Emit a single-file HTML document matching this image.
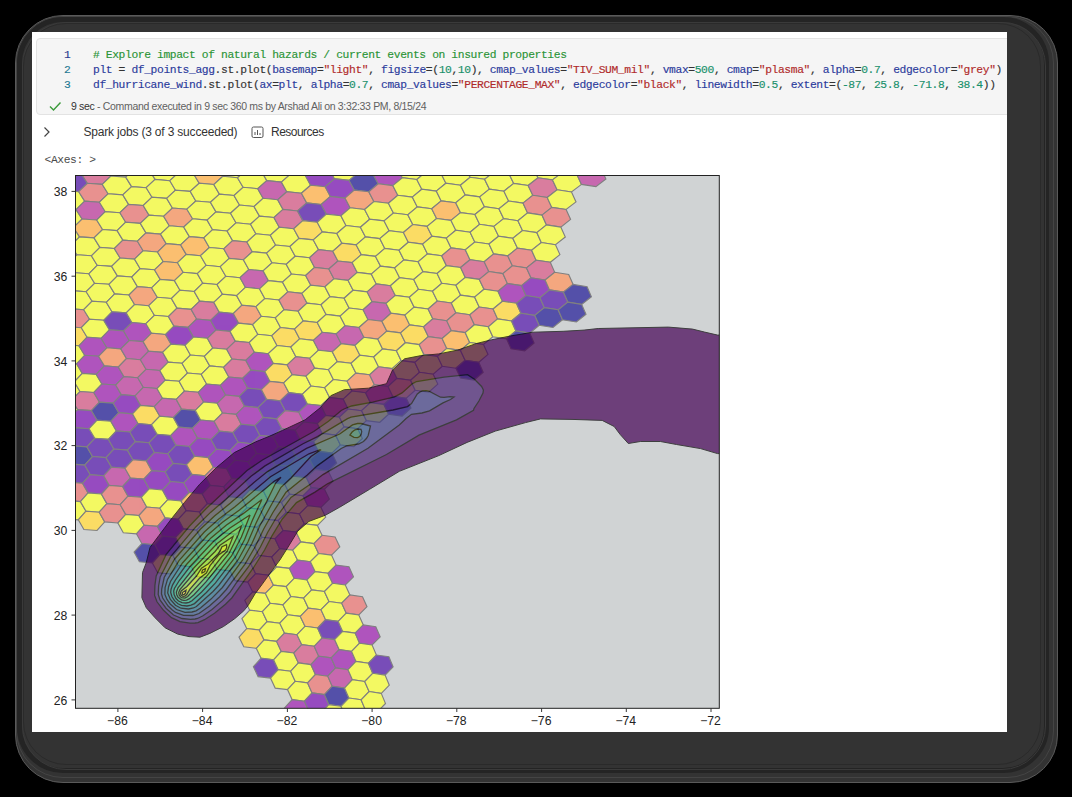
<!DOCTYPE html>
<html><head><meta charset="utf-8">
<style>
html,body{margin:0;padding:0;background:#000;width:1072px;height:797px;overflow:hidden;position:relative}
.sh{position:absolute;box-sizing:border-box}
.panel{position:absolute;left:32px;top:32px;width:975px;height:700px;background:#fff;overflow:hidden}
.code{position:absolute;left:4px;top:5.5px;width:980px;height:77px;background:#f5f5f5;border:1px solid #e3e3e3;border-radius:4px;box-sizing:border-box}
.mono{font-family:"Liberation Mono",monospace;font-size:11.3px;letter-spacing:-0.38px;-webkit-text-stroke:0.15px;white-space:pre;position:absolute;line-height:15px}
.sans{font-family:"Liberation Sans",sans-serif;white-space:pre;position:absolute}
.ln{color:#237893}
.kw{color:#2b3b9c}
.cm{color:#2a9436}
.st{color:#b02a2a}
.nu{color:#17906a}
.op{color:#333}
</style></head><body>
<div class="sh" style="left:15px;top:15px;width:1043px;height:768px;border-radius:48px;background:#333;border:1px solid #5a5a5a"></div>
<div class="sh" style="left:16px;top:16px;width:1038px;height:762px;border-radius:47px;border:1px solid #444"></div>
<div class="sh" style="left:17px;top:17px;width:1032px;height:756px;border-radius:46px;border:5px solid #242424"></div>
<div class="sh" style="left:22px;top:22px;width:1024px;height:748px;border-radius:44px;border:1px solid #3a3a3a"></div>
<div class="sh" style="left:23px;top:23px;width:1018px;height:742px;border-radius:43px;border:1px solid #2a2a2a"></div>
<div class="panel">
 <div class="code"></div>
 <div class="mono" style="left:32px;top:16px;color:#2a3b8f">1</div>
 <div class="mono ln" style="left:32px;top:31px">2</div>
 <div class="mono ln" style="left:32px;top:46px">3</div>
 <div class="mono" style="left:61px;top:16px"><span class="cm"># Explore impact of natural hazards / current events on insured properties</span></div>
 <div class="mono" style="left:61px;top:31px"><span class="kw">plt</span><span class="op"> = </span><span class="kw">df_points_agg</span><span class="op">.st.plot(</span><span class="kw">basemap</span><span class="op">=</span><span class="st">"light"</span><span class="op">, </span><span class="kw">figsize</span><span class="op">=(</span><span class="nu">10</span><span class="op">,</span><span class="nu">10</span><span class="op">), </span><span class="kw">cmap_values</span><span class="op">=</span><span class="st">"TIV_SUM_mil"</span><span class="op">, </span><span class="kw">vmax</span><span class="op">=</span><span class="nu">500</span><span class="op">, </span><span class="kw">cmap</span><span class="op">=</span><span class="st">"plasma"</span><span class="op">, </span><span class="kw">alpha</span><span class="op">=</span><span class="nu">0.7</span><span class="op">, </span><span class="kw">edgecolor</span><span class="op">=</span><span class="st">"grey"</span><span class="op">)</span></div>
 <div class="mono" style="left:61px;top:46px"><span class="kw">df_hurricane_wind</span><span class="op">.st.plot(</span><span class="kw">ax</span><span class="op">=</span><span class="kw">plt</span><span class="op">, </span><span class="kw">alpha</span><span class="op">=</span><span class="nu">0.7</span><span class="op">, </span><span class="kw">cmap_values</span><span class="op">=</span><span class="st">"PERCENTAGE_MAX"</span><span class="op">, </span><span class="kw">edgecolor</span><span class="op">=</span><span class="st">"black"</span><span class="op">, </span><span class="kw">linewidth</span><span class="op">=</span><span class="nu">0.5</span><span class="op">, </span><span class="kw">extent</span><span class="op">=(</span><span class="nu">-87</span><span class="op">, </span><span class="nu">25.8</span><span class="op">, </span><span class="nu">-71.8</span><span class="op">, </span><span class="nu">38.4</span><span class="op">))</span></div>

 <svg style="position:absolute;left:16px;top:68px" width="14" height="12" viewBox="0 0 14 12"><path d="M2 6.5 L5.5 10 L12.5 2.5" fill="none" stroke="#3a9a3a" stroke-width="1.4"/></svg>
 <div class="sans" style="left:39px;top:68px;font-size:10.5px;letter-spacing:-0.33px;color:#616161"><span style="color:#333">9 sec</span> - Command executed in 9 sec 360 ms by Arshad Ali on 3:32:33 PM, 8/15/24</div>
 <svg style="position:absolute;left:10px;top:94px" width="10" height="12" viewBox="0 0 10 12"><path d="M2.5 1.5 L7 6 L2.5 10.5" fill="none" stroke="#444" stroke-width="1.2"/></svg>
 <div class="sans" style="left:51.5px;top:93px;font-size:12px;letter-spacing:-0.19px;color:#333">Spark jobs (3 of 3 succeeded)</div>
 <svg style="position:absolute;left:219px;top:94px" width="14" height="13" viewBox="0 0 14 13"><rect x="1" y="1" width="11" height="10.5" rx="1.5" fill="none" stroke="#555" stroke-width="1"/><path d="M4 9V6M6.5 9V4M9 9V7" stroke="#555" stroke-width="1"/></svg>
 <div class="sans" style="left:239px;top:93px;font-size:12px;letter-spacing:-0.52px;color:#333">Resources</div>
 <div class="mono" style="left:12.5px;top:121px;color:#4a4a4a;-webkit-text-stroke:0">&lt;Axes: &gt;</div>
</div>
<svg width="1072" height="797" style="position:absolute;left:0;top:0" font-family="Liberation Sans, sans-serif">
<defs><clipPath id="ax"><rect x="75.5" y="175.5" width="643.8" height="532.8"/></clipPath></defs>
<rect x="75.5" y="175.5" width="643.8" height="532.8" fill="#d0d3d4"/>
<g clip-path="url(#ax)">
<g stroke="#808080" stroke-width="1.15">
<polygon points="90.2,165.5 81.4,173.9 66.6,172.9 60.5,163.5 69.3,155.1 84.1,156.1" fill="#f3f962"/>
<polygon points="87.4,183.3 78.7,191.7 64.0,190.7 57.9,181.3 66.6,172.9 81.4,173.9" fill="#784db8"/>
<polygon points="110.9,176.0 102.2,184.4 87.4,183.3 81.4,173.9 90.2,165.5 105.0,166.6" fill="#d97d9e"/>
<polygon points="134.5,168.8 125.7,177.1 110.9,176.0 105.0,166.6 113.8,158.2 128.6,159.3" fill="#f3f962"/>
<polygon points="158.2,161.7 149.3,170.0 134.5,168.8 128.6,159.3 137.5,151.0 152.4,152.2" fill="#f3f962"/>
<polygon points="84.7,201.1 76.1,209.6 61.5,208.6 55.4,199.2 64.0,190.7 78.7,191.7" fill="#f3f962"/>
<polygon points="108.1,193.8 99.4,202.2 84.7,201.1 78.7,191.7 87.4,183.3 102.2,184.4" fill="#e8918f"/>
<polygon points="131.6,186.6 122.8,194.9 108.1,193.8 102.2,184.4 110.9,176.0 125.7,177.1" fill="#f3f962"/>
<polygon points="155.1,179.4 146.2,187.7 131.6,186.6 125.7,177.1 134.5,168.8 149.3,170.0" fill="#f3f962"/>
<polygon points="178.8,172.4 169.8,180.7 155.1,179.4 149.3,170.0 158.2,161.7 173.0,162.9" fill="#f3f962"/>
<polygon points="202.5,165.5 193.5,173.7 178.8,172.4 173.0,162.9 182.0,154.7 196.8,155.9" fill="#f3f962"/>
<polygon points="82.1,219.0 73.5,227.4 59.0,226.5 52.9,217.0 61.5,208.6 76.1,209.6" fill="#f3f962"/>
<polygon points="105.3,211.7 96.7,220.0 82.1,219.0 76.1,209.6 84.7,201.1 99.4,202.2" fill="#c768af"/>
<polygon points="128.6,204.4 119.9,212.7 105.3,211.7 99.4,202.2 108.1,193.8 122.8,194.9" fill="#f3f962"/>
<polygon points="152.0,197.2 143.2,205.5 128.6,204.4 122.8,194.9 131.6,186.6 146.2,187.7" fill="#f3f962"/>
<polygon points="175.5,190.2 166.7,198.4 152.0,197.2 146.2,187.7 155.1,179.4 169.8,180.7" fill="#f3f962"/>
<polygon points="199.2,183.2 190.2,191.4 175.5,190.2 169.8,180.7 178.8,172.4 193.5,173.7" fill="#f3f962"/>
<polygon points="222.8,176.3 213.8,184.5 199.2,183.2 193.5,173.7 202.5,165.5 217.2,166.8" fill="#fbbf70"/>
<polygon points="246.6,169.6 237.5,177.7 222.8,176.3 217.2,166.8 226.3,158.6 241.1,160.0" fill="#f3f962"/>
<polygon points="270.5,162.9 261.3,171.0 246.6,169.6 241.1,160.0 250.3,151.9 265.0,153.3" fill="#f3f962"/>
<polygon points="79.5,236.9 71.0,245.3 56.5,244.4 50.5,234.9 59.0,226.5 73.5,227.4" fill="#f3f962"/>
<polygon points="102.6,229.5 94.0,237.9 79.5,236.9 73.5,227.4 82.1,219.0 96.7,220.0" fill="#fbbf70"/>
<polygon points="125.7,222.2 117.1,230.6 102.6,229.5 96.7,220.0 105.3,211.7 119.9,212.7" fill="#f3f962"/>
<polygon points="149.0,215.1 140.3,223.4 125.7,222.2 119.9,212.7 128.6,204.4 143.2,205.5" fill="#e8918f"/>
<polygon points="172.4,208.0 163.6,216.3 149.0,215.1 143.2,205.5 152.0,197.2 166.7,198.4" fill="#f3f962"/>
<polygon points="195.8,201.0 186.9,209.2 172.4,208.0 166.7,198.4 175.5,190.2 190.2,191.4" fill="#f3f962"/>
<polygon points="219.4,194.1 210.4,202.3 195.8,201.0 190.2,191.4 199.2,183.2 213.8,184.5" fill="#f3f962"/>
<polygon points="243.1,187.3 234.0,195.5 219.4,194.1 213.8,184.5 222.8,176.3 237.5,177.7" fill="#f3f962"/>
<polygon points="266.8,180.6 257.7,188.7 243.1,187.3 237.5,177.7 246.6,169.6 261.3,171.0" fill="#f3f962"/>
<polygon points="290.6,174.0 281.4,182.1 266.8,180.6 261.3,171.0 270.5,162.9 285.2,164.4" fill="#f3f962"/>
<polygon points="314.6,167.5 305.3,175.5 290.6,174.0 285.2,164.4 294.5,156.3 309.2,157.9" fill="#f3f962"/>
<polygon points="76.9,254.8 68.5,263.3 54.1,262.3 48.1,252.9 56.5,244.4 71.0,245.3" fill="#f3f962"/>
<polygon points="99.9,247.4 91.4,255.8 76.9,254.8 71.0,245.3 79.5,236.9 94.0,237.9" fill="#f3f962"/>
<polygon points="122.9,240.1 114.3,248.5 99.9,247.4 94.0,237.9 102.6,229.5 117.1,230.6" fill="#f3f962"/>
<polygon points="146.0,232.9 137.4,241.2 122.9,240.1 117.1,230.6 125.7,222.2 140.3,223.4" fill="#f3f962"/>
<polygon points="169.3,225.8 160.5,234.1 146.0,232.9 140.3,223.4 149.0,215.1 163.6,216.3" fill="#f3f962"/>
<polygon points="192.6,218.8 183.7,227.0 169.3,225.8 163.6,216.3 172.4,208.0 186.9,209.2" fill="#f4a77f"/>
<polygon points="216.0,211.9 207.1,220.1 192.6,218.8 186.9,209.2 195.8,201.0 210.4,202.3" fill="#f3f962"/>
<polygon points="239.5,205.0 230.5,213.2 216.0,211.9 210.4,202.3 219.4,194.1 234.0,195.5" fill="#f3f962"/>
<polygon points="263.1,198.3 254.0,206.5 239.5,205.0 234.0,195.5 243.1,187.3 257.7,188.7" fill="#f3f962"/>
<polygon points="286.8,191.7 277.7,199.8 263.1,198.3 257.7,188.7 266.8,180.6 281.4,182.1" fill="#c768af"/>
<polygon points="310.6,185.2 301.4,193.2 286.8,191.7 281.4,182.1 290.6,174.0 305.3,175.5" fill="#f3f962"/>
<polygon points="334.5,178.7 325.2,186.8 310.6,185.2 305.3,175.5 314.6,167.5 329.2,169.1" fill="#964bc0"/>
<polygon points="358.5,172.4 349.1,180.4 334.5,178.7 329.2,169.1 338.6,161.1 353.3,162.8" fill="#f3f962"/>
<polygon points="382.6,166.2 373.1,174.1 358.5,172.4 353.3,162.8 362.8,154.8 377.4,156.5" fill="#f3f962"/>
<polygon points="74.4,272.7 66.1,281.2 51.7,280.3 45.7,270.8 54.1,262.3 68.5,263.3" fill="#f3f962"/>
<polygon points="97.2,265.3 88.8,273.8 74.4,272.7 68.5,263.3 76.9,254.8 91.4,255.8" fill="#f3f962"/>
<polygon points="120.1,258.0 111.6,266.4 97.2,265.3 91.4,255.8 99.9,247.4 114.3,248.5" fill="#f3f962"/>
<polygon points="143.1,250.8 134.5,259.1 120.1,258.0 114.3,248.5 122.9,240.1 137.4,241.2" fill="#e8918f"/>
<polygon points="166.2,243.6 157.5,252.0 143.1,250.8 137.4,241.2 146.0,232.9 160.5,234.1" fill="#f4a77f"/>
<polygon points="189.4,236.6 180.6,244.9 166.2,243.6 160.5,234.1 169.3,225.8 183.7,227.0" fill="#f3f962"/>
<polygon points="212.6,229.7 203.8,237.9 189.4,236.6 183.7,227.0 192.6,218.8 207.1,220.1" fill="#f3f962"/>
<polygon points="236.0,222.8 227.1,231.0 212.6,229.7 207.1,220.1 216.0,211.9 230.5,213.2" fill="#f3f962"/>
<polygon points="259.5,216.1 250.5,224.2 236.0,222.8 230.5,213.2 239.5,205.0 254.0,206.5" fill="#f3f962"/>
<polygon points="283.0,209.4 273.9,217.5 259.5,216.1 254.0,206.5 263.1,198.3 277.7,199.8" fill="#f3f962"/>
<polygon points="306.7,202.9 297.5,211.0 283.0,209.4 277.7,199.8 286.8,191.7 301.4,193.2" fill="#d97d9e"/>
<polygon points="330.4,196.4 321.2,204.5 306.7,202.9 301.4,193.2 310.6,185.2 325.2,186.8" fill="#fbbf70"/>
<polygon points="354.3,190.1 345.0,198.1 330.4,196.4 325.2,186.8 334.5,178.7 349.1,180.4" fill="#964bc0"/>
<polygon points="378.2,183.8 368.8,191.8 354.3,190.1 349.1,180.4 358.5,172.4 373.1,174.1" fill="#5450a9"/>
<polygon points="402.3,177.7 392.8,185.6 378.2,183.8 373.1,174.1 382.6,166.2 397.2,168.0" fill="#af54bd"/>
<polygon points="426.4,171.6 416.8,179.5 402.3,177.7 397.2,168.0 406.8,160.1 421.4,161.9" fill="#f3f962"/>
<polygon points="450.7,165.6 441.0,173.5 426.4,171.6 421.4,161.9 431.1,154.0 445.7,155.9" fill="#f3f962"/>
<polygon points="94.6,283.3 86.2,291.7 72.0,290.7 66.1,281.2 74.4,272.7 88.8,273.8" fill="#f3f962"/>
<polygon points="117.4,275.9 108.9,284.3 94.6,283.3 88.8,273.8 97.2,265.3 111.6,266.4" fill="#f3f962"/>
<polygon points="140.2,268.7 131.7,277.0 117.4,275.9 111.6,266.4 120.1,258.0 134.5,259.1" fill="#f3f962"/>
<polygon points="163.2,261.5 154.5,269.8 140.2,268.7 134.5,259.1 143.1,250.8 157.5,252.0" fill="#f3f962"/>
<polygon points="186.2,254.4 177.5,262.7 163.2,261.5 157.5,252.0 166.2,243.6 180.6,244.9" fill="#fbbf70"/>
<polygon points="209.3,247.5 200.5,255.7 186.2,254.4 180.6,244.9 189.4,236.6 203.8,237.9" fill="#fbbf70"/>
<polygon points="232.6,240.6 223.7,248.8 209.3,247.5 203.8,237.9 212.6,229.7 227.1,231.0" fill="#f3f962"/>
<polygon points="255.9,233.8 246.9,242.0 232.6,240.6 227.1,231.0 236.0,222.8 250.5,224.2" fill="#f3f962"/>
<polygon points="279.3,227.2 270.3,235.3 255.9,233.8 250.5,224.2 259.5,216.1 273.9,217.5" fill="#f3f962"/>
<polygon points="302.8,220.6 293.7,228.7 279.3,227.2 273.9,217.5 283.0,209.4 297.5,211.0" fill="#d97d9e"/>
<polygon points="326.4,214.1 317.2,222.2 302.8,220.6 297.5,211.0 306.7,202.9 321.2,204.5" fill="#784db8"/>
<polygon points="350.1,207.8 340.9,215.8 326.4,214.1 321.2,204.5 330.4,196.4 345.0,198.1" fill="#af54bd"/>
<polygon points="373.9,201.5 364.6,209.5 350.1,207.8 345.0,198.1 354.3,190.1 368.8,191.8" fill="#f4a77f"/>
<polygon points="397.8,195.3 388.4,203.2 373.9,201.5 368.8,191.8 378.2,183.8 392.8,185.6" fill="#e8918f"/>
<polygon points="421.8,189.2 412.3,197.1 397.8,195.3 392.8,185.6 402.3,177.7 416.8,179.5" fill="#f3f962"/>
<polygon points="445.9,183.2 436.3,191.1 421.8,189.2 416.8,179.5 426.4,171.6 441.0,173.5" fill="#f3f962"/>
<polygon points="470.1,177.3 460.4,185.2 445.9,183.2 441.0,173.5 450.7,165.6 465.2,167.6" fill="#f3f962"/>
<polygon points="494.4,171.6 484.6,179.3 470.1,177.3 465.2,167.6 475.0,159.8 489.6,161.8" fill="#f3f962"/>
<polygon points="518.8,165.9 508.9,173.6 494.4,171.6 489.6,161.8 499.4,154.0 514.0,156.1" fill="#f3f962"/>
<polygon points="92.1,301.2 83.7,309.7 69.6,308.7 63.7,299.2 72.0,290.7 86.2,291.7" fill="#f3f962"/>
<polygon points="114.7,293.9 106.3,302.3 92.1,301.2 86.2,291.7 94.6,283.3 108.9,284.3" fill="#f3f962"/>
<polygon points="137.4,286.6 128.9,295.0 114.7,293.9 108.9,284.3 117.4,275.9 131.7,277.0" fill="#f3f962"/>
<polygon points="160.2,279.4 151.6,287.8 137.4,286.6 131.7,277.0 140.2,268.7 154.5,269.8" fill="#f3f962"/>
<polygon points="183.1,272.3 174.4,280.6 160.2,279.4 154.5,269.8 163.2,261.5 177.5,262.7" fill="#fbbf70"/>
<polygon points="206.1,265.3 197.3,273.6 183.1,272.3 177.5,262.7 186.2,254.4 200.5,255.7" fill="#f3f962"/>
<polygon points="229.2,258.4 220.3,266.7 206.1,265.3 200.5,255.7 209.3,247.5 223.7,248.8" fill="#f3f962"/>
<polygon points="252.3,251.7 243.4,259.8 229.2,258.4 223.7,248.8 232.6,240.6 246.9,242.0" fill="#e8918f"/>
<polygon points="275.6,245.0 266.6,253.1 252.3,251.7 246.9,242.0 255.9,233.8 270.3,235.3" fill="#f3f962"/>
<polygon points="299.0,238.4 289.9,246.5 275.6,245.0 270.3,235.3 279.3,227.2 293.7,228.7" fill="#f3f962"/>
<polygon points="322.4,231.9 313.3,239.9 299.0,238.4 293.7,228.7 302.8,220.6 317.2,222.2" fill="#fbdc64"/>
<polygon points="346.0,225.5 336.8,233.5 322.4,231.9 317.2,222.2 326.4,214.1 340.9,215.8" fill="#f3f962"/>
<polygon points="369.7,219.2 360.4,227.2 346.0,225.5 340.9,215.8 350.1,207.8 364.6,209.5" fill="#f3f962"/>
<polygon points="393.4,213.0 384.1,220.9 369.7,219.2 364.6,209.5 373.9,201.5 388.4,203.2" fill="#f3f962"/>
<polygon points="417.3,206.9 407.8,214.8 393.4,213.0 388.4,203.2 397.8,195.3 412.3,197.1" fill="#f3f962"/>
<polygon points="441.2,200.9 431.7,208.7 417.3,206.9 412.3,197.1 421.8,189.2 436.3,191.1" fill="#f3f962"/>
<polygon points="465.3,194.9 455.7,202.8 441.2,200.9 436.3,191.1 445.9,183.2 460.4,185.2" fill="#f3f962"/>
<polygon points="489.4,189.1 479.7,196.9 465.3,194.9 460.4,185.2 470.1,177.3 484.6,179.3" fill="#f3f962"/>
<polygon points="513.7,183.4 503.9,191.2 489.4,189.1 484.6,179.3 494.4,171.6 508.9,173.6" fill="#f3f962"/>
<polygon points="538.0,177.8 528.1,185.5 513.7,183.4 508.9,173.6 518.8,165.9 533.3,168.0" fill="#f3f962"/>
<polygon points="562.4,172.3 552.5,179.9 538.0,177.8 533.3,168.0 543.2,160.3 557.8,162.4" fill="#f3f962"/>
<polygon points="586.9,166.9 576.9,174.5 562.4,172.3 557.8,162.4 567.8,154.8 582.4,157.0" fill="#f3f962"/>
<polygon points="89.6,319.2 81.3,327.7 67.2,326.7 61.3,317.2 69.6,308.7 83.7,309.7" fill="#e8918f"/>
<polygon points="112.0,311.8 103.7,320.3 89.6,319.2 83.7,309.7 92.1,301.2 106.3,302.3" fill="#f3f962"/>
<polygon points="134.6,304.5 126.2,312.9 112.0,311.8 106.3,302.3 114.7,293.9 128.9,295.0" fill="#f3f962"/>
<polygon points="157.3,297.3 148.7,305.7 134.6,304.5 128.9,295.0 137.4,286.6 151.6,287.8" fill="#f4a77f"/>
<polygon points="180.0,290.2 171.4,298.5 157.3,297.3 151.6,287.8 160.2,279.4 174.4,280.6" fill="#f3f962"/>
<polygon points="202.8,283.2 194.2,291.5 180.0,290.2 174.4,280.6 183.1,272.3 197.3,273.6" fill="#f3f962"/>
<polygon points="225.8,276.3 217.0,284.5 202.8,283.2 197.3,273.6 206.1,265.3 220.3,266.7" fill="#f3f962"/>
<polygon points="248.8,269.5 240.0,277.7 225.8,276.3 220.3,266.7 229.2,258.4 243.4,259.8" fill="#f3f962"/>
<polygon points="272.0,262.8 263.1,270.9 248.8,269.5 243.4,259.8 252.3,251.7 266.6,253.1" fill="#f3f962"/>
<polygon points="295.2,256.2 286.2,264.3 272.0,262.8 266.6,253.1 275.6,245.0 289.9,246.5" fill="#f3f962"/>
<polygon points="318.5,249.6 309.5,257.7 295.2,256.2 289.9,246.5 299.0,238.4 313.3,239.9" fill="#f3f962"/>
<polygon points="341.9,243.2 332.8,251.3 318.5,249.6 313.3,239.9 322.4,231.9 336.8,233.5" fill="#f3f962"/>
<polygon points="365.5,236.9 356.2,244.9 341.9,243.2 336.8,233.5 346.0,225.5 360.4,227.2" fill="#f3f962"/>
<polygon points="389.1,230.7 379.8,238.6 365.5,236.9 360.4,227.2 369.7,219.2 384.1,220.9" fill="#f3f962"/>
<polygon points="412.8,224.5 403.4,232.5 389.1,230.7 384.1,220.9 393.4,213.0 407.8,214.8" fill="#f3f962"/>
<polygon points="436.6,218.5 427.1,226.4 412.8,224.5 407.8,214.8 417.3,206.9 431.7,208.7" fill="#f3f962"/>
<polygon points="460.5,212.6 451.0,220.4 436.6,218.5 431.7,208.7 441.2,200.9 455.7,202.8" fill="#fbbf70"/>
<polygon points="484.5,206.7 474.9,214.5 460.5,212.6 455.7,202.8 465.3,194.9 479.7,196.9" fill="#f3f962"/>
<polygon points="508.6,201.0 498.9,208.8 484.5,206.7 479.7,196.9 489.4,189.1 503.9,191.2" fill="#f3f962"/>
<polygon points="532.8,195.3 523.0,203.1 508.6,201.0 503.9,191.2 513.7,183.4 528.1,185.5" fill="#f3f962"/>
<polygon points="557.1,189.8 547.2,197.5 532.8,195.3 528.1,185.5 538.0,177.8 552.5,179.9" fill="#d97d9e"/>
<polygon points="581.5,184.4 571.5,192.0 557.1,189.8 552.5,179.9 562.4,172.3 576.9,174.5" fill="#f3f962"/>
<polygon points="605.9,179.0 595.9,186.6 581.5,184.4 576.9,174.5 586.9,166.9 601.5,169.1" fill="#c768af"/>
<polygon points="87.1,337.2 78.9,345.8 64.9,344.8 59.0,335.3 67.2,326.7 81.3,327.7" fill="#fbdc64"/>
<polygon points="109.4,329.8 101.1,338.3 87.1,337.2 81.3,327.7 89.6,319.2 103.7,320.3" fill="#f3f962"/>
<polygon points="131.9,322.5 123.5,330.9 109.4,329.8 103.7,320.3 112.0,311.8 126.2,312.9" fill="#784db8"/>
<polygon points="154.4,315.3 145.9,323.7 131.9,322.5 126.2,312.9 134.6,304.5 148.7,305.7" fill="#f3f962"/>
<polygon points="177.0,308.1 168.4,316.5 154.4,315.3 148.7,305.7 157.3,297.3 171.4,298.5" fill="#f3f962"/>
<polygon points="199.7,301.1 191.1,309.4 177.0,308.1 171.4,298.5 180.0,290.2 194.2,291.5" fill="#f3f962"/>
<polygon points="222.5,294.2 213.8,302.4 199.7,301.1 194.2,291.5 202.8,283.2 217.0,284.5" fill="#f3f962"/>
<polygon points="245.4,287.3 236.6,295.6 222.5,294.2 217.0,284.5 225.8,276.3 240.0,277.7" fill="#f3f962"/>
<polygon points="268.4,280.6 259.5,288.8 245.4,287.3 240.0,277.7 248.8,269.5 263.1,270.9" fill="#c768af"/>
<polygon points="291.5,274.0 282.5,282.1 268.4,280.6 263.1,270.9 272.0,262.8 286.2,264.3" fill="#f3f962"/>
<polygon points="314.6,267.4 305.6,275.5 291.5,274.0 286.2,264.3 295.2,256.2 309.5,257.7" fill="#f3f962"/>
<polygon points="337.9,261.0 328.8,269.0 314.6,267.4 309.5,257.7 318.5,249.6 332.8,251.3" fill="#d97d9e"/>
<polygon points="361.3,254.6 352.1,262.6 337.9,261.0 332.8,251.3 341.9,243.2 356.2,244.9" fill="#fbdc64"/>
<polygon points="384.8,248.4 375.5,256.4 361.3,254.6 356.2,244.9 365.5,236.9 379.8,238.6" fill="#f3f962"/>
<polygon points="408.3,242.2 399.0,250.2 384.8,248.4 379.8,238.6 389.1,230.7 403.4,232.5" fill="#f3f962"/>
<polygon points="432.0,236.2 422.6,244.1 408.3,242.2 403.4,232.5 412.8,224.5 427.1,226.4" fill="#fbdc64"/>
<polygon points="455.8,230.2 446.3,238.1 432.0,236.2 427.1,226.4 436.6,218.5 451.0,220.4" fill="#f3f962"/>
<polygon points="479.6,224.3 470.1,232.2 455.8,230.2 451.0,220.4 460.5,212.6 474.9,214.5" fill="#f3f962"/>
<polygon points="503.6,218.6 493.9,226.4 479.6,224.3 474.9,214.5 484.5,206.7 498.9,208.8" fill="#f3f962"/>
<polygon points="527.6,212.9 517.9,220.7 503.6,218.6 498.9,208.8 508.6,201.0 523.0,203.1" fill="#f3f962"/>
<polygon points="551.8,207.4 542.0,215.1 527.6,212.9 523.0,203.1 532.8,195.3 547.2,197.5" fill="#e8918f"/>
<polygon points="576.0,201.9 566.1,209.5 551.8,207.4 547.2,197.5 557.1,189.8 571.5,192.0" fill="#f3f962"/>
<polygon points="84.7,355.3 76.6,363.8 62.6,362.8 56.8,353.3 64.9,344.8 78.9,345.8" fill="#f3f962"/>
<polygon points="106.9,347.8 98.6,356.3 84.7,355.3 78.9,345.8 87.1,337.2 101.1,338.3" fill="#af54bd"/>
<polygon points="129.2,340.5 120.8,348.9 106.9,347.8 101.1,338.3 109.4,329.8 123.5,330.9" fill="#af54bd"/>
<polygon points="151.5,333.2 143.1,341.6 129.2,340.5 123.5,330.9 131.9,322.5 145.9,323.7" fill="#af54bd"/>
<polygon points="174.0,326.1 165.5,334.5 151.5,333.2 145.9,323.7 154.4,315.3 168.4,316.5" fill="#f3f962"/>
<polygon points="196.6,319.0 188.0,327.4 174.0,326.1 168.4,316.5 177.0,308.1 191.1,309.4" fill="#e8918f"/>
<polygon points="219.2,312.1 210.6,320.4 196.6,319.0 191.1,309.4 199.7,301.1 213.8,302.4" fill="#d97d9e"/>
<polygon points="242.0,305.2 233.3,313.5 219.2,312.1 213.8,302.4 222.5,294.2 236.6,295.6" fill="#f3f962"/>
<polygon points="264.8,298.5 256.0,306.7 242.0,305.2 236.6,295.6 245.4,287.3 259.5,288.8" fill="#f3f962"/>
<polygon points="287.8,291.8 278.9,300.0 264.8,298.5 259.5,288.8 268.4,280.6 282.5,282.1" fill="#f3f962"/>
<polygon points="310.8,285.2 301.9,293.4 287.8,291.8 282.5,282.1 291.5,274.0 305.6,275.5" fill="#f3f962"/>
<polygon points="333.9,278.8 324.9,286.8 310.8,285.2 305.6,275.5 314.6,267.4 328.8,269.0" fill="#e8918f"/>
<polygon points="357.2,272.4 348.1,280.4 333.9,278.8 328.8,269.0 337.9,261.0 352.1,262.6" fill="#d97d9e"/>
<polygon points="380.5,266.1 371.3,274.1 357.2,272.4 352.1,262.6 361.3,254.6 375.5,256.4" fill="#f3f962"/>
<polygon points="403.9,259.9 394.7,267.9 380.5,266.1 375.5,256.4 384.8,248.4 399.0,250.2" fill="#f3f962"/>
<polygon points="427.5,253.9 418.1,261.8 403.9,259.9 399.0,250.2 408.3,242.2 422.6,244.1" fill="#f3f962"/>
<polygon points="451.1,247.9 441.7,255.8 427.5,253.9 422.6,244.1 432.0,236.2 446.3,238.1" fill="#f3f962"/>
<polygon points="474.8,242.0 465.3,249.8 451.1,247.9 446.3,238.1 455.8,230.2 470.1,232.2" fill="#f3f962"/>
<polygon points="498.6,236.2 489.0,244.0 474.8,242.0 470.1,232.2 479.6,224.3 493.9,226.4" fill="#f3f962"/>
<polygon points="522.5,230.5 512.8,238.3 498.6,236.2 493.9,226.4 503.6,218.6 517.9,220.7" fill="#f3f962"/>
<polygon points="546.5,224.9 536.8,232.6 522.5,230.5 517.9,220.7 527.6,212.9 542.0,215.1" fill="#f3f962"/>
<polygon points="570.6,219.4 560.8,227.1 546.5,224.9 542.0,215.1 551.8,207.4 566.1,209.5" fill="#e8918f"/>
<polygon points="82.3,373.4 74.2,381.9 60.4,380.9 54.5,371.4 62.6,362.8 76.6,363.8" fill="#f3f962"/>
<polygon points="104.4,365.9 96.2,374.4 82.3,373.4 76.6,363.8 84.7,355.3 98.6,356.3" fill="#af54bd"/>
<polygon points="126.5,358.5 118.3,367.0 104.4,365.9 98.6,356.3 106.9,347.8 120.8,348.9" fill="#f4a77f"/>
<polygon points="148.7,351.2 140.4,359.7 126.5,358.5 120.8,348.9 129.2,340.5 143.1,341.6" fill="#c768af"/>
<polygon points="171.1,344.1 162.6,352.4 148.7,351.2 143.1,341.6 151.5,333.2 165.5,334.5" fill="#f4a77f"/>
<polygon points="193.5,337.0 185.0,345.3 171.1,344.1 165.5,334.5 174.0,326.1 188.0,327.4" fill="#964bc0"/>
<polygon points="216.0,330.0 207.4,338.3 193.5,337.0 188.0,327.4 196.6,319.0 210.6,320.4" fill="#af54bd"/>
<polygon points="238.6,323.1 230.0,331.4 216.0,330.0 210.6,320.4 219.2,312.1 233.3,313.5" fill="#964bc0"/>
<polygon points="261.3,316.3 252.6,324.6 238.6,323.1 233.3,313.5 242.0,305.2 256.0,306.7" fill="#f4a77f"/>
<polygon points="284.1,309.7 275.3,317.8 261.3,316.3 256.0,306.7 264.8,298.5 278.9,300.0" fill="#f3f962"/>
<polygon points="307.0,303.1 298.1,311.2 284.1,309.7 278.9,300.0 287.8,291.8 301.9,293.4" fill="#e8918f"/>
<polygon points="330.0,296.6 321.0,304.7 307.0,303.1 301.9,293.4 310.8,285.2 324.9,286.8" fill="#f3f962"/>
<polygon points="353.1,290.2 344.1,298.2 330.0,296.6 324.9,286.8 333.9,278.8 348.1,280.4" fill="#f3f962"/>
<polygon points="376.3,283.9 367.2,291.9 353.1,290.2 348.1,280.4 357.2,272.4 371.3,274.1" fill="#f3f962"/>
<polygon points="399.6,277.7 390.4,285.7 376.3,283.9 371.3,274.1 380.5,266.1 394.7,267.9" fill="#f3f962"/>
<polygon points="423.0,271.6 413.7,279.5 399.6,277.7 394.7,267.9 403.9,259.9 418.1,261.8" fill="#f3f962"/>
<polygon points="446.4,265.6 437.1,273.5 423.0,271.6 418.1,261.8 427.5,253.9 441.7,255.8" fill="#f3f962"/>
<polygon points="470.0,259.7 460.6,267.5 446.4,265.6 441.7,255.8 451.1,247.9 465.3,249.8" fill="#e8918f"/>
<polygon points="493.7,253.9 484.2,261.7 470.0,259.7 465.3,249.8 474.8,242.0 489.0,244.0" fill="#f3f962"/>
<polygon points="517.4,248.1 507.8,255.9 493.7,253.9 489.0,244.0 498.6,236.2 512.8,238.3" fill="#f3f962"/>
<polygon points="541.3,242.5 531.6,250.3 517.4,248.1 512.8,238.3 522.5,230.5 536.8,232.6" fill="#f3f962"/>
<polygon points="565.3,237.0 555.5,244.7 541.3,242.5 536.8,232.6 546.5,224.9 560.8,227.1" fill="#f3f962"/>
<polygon points="80.0,391.5 72.0,400.0 58.2,399.0 52.4,389.5 60.4,380.9 74.2,381.9" fill="#f3f962"/>
<polygon points="101.9,384.0 93.8,392.5 80.0,391.5 74.2,381.9 82.3,373.4 96.2,374.4" fill="#f3f962"/>
<polygon points="123.9,376.6 115.7,385.0 101.9,384.0 96.2,374.4 104.4,365.9 118.3,367.0" fill="#af54bd"/>
<polygon points="146.0,369.3 137.7,377.7 123.9,376.6 118.3,367.0 126.5,358.5 140.4,359.7" fill="#d97d9e"/>
<polygon points="168.2,362.1 159.8,370.5 146.0,369.3 140.4,359.7 148.7,351.2 162.6,352.4" fill="#c768af"/>
<polygon points="190.4,355.0 182.0,363.3 168.2,362.1 162.6,352.4 171.1,344.1 185.0,345.3" fill="#f3f962"/>
<polygon points="212.8,348.0 204.3,356.3 190.4,355.0 185.0,345.3 193.5,337.0 207.4,338.3" fill="#f3f962"/>
<polygon points="235.3,341.1 226.7,349.3 212.8,348.0 207.4,338.3 216.0,330.0 230.0,331.4" fill="#d97d9e"/>
<polygon points="257.8,334.3 249.2,342.5 235.3,341.1 230.0,331.4 238.6,323.1 252.6,324.6" fill="#f3f962"/>
<polygon points="280.5,327.5 271.8,335.7 257.8,334.3 252.6,324.6 261.3,316.3 275.3,317.8" fill="#f3f962"/>
<polygon points="303.3,320.9 294.5,329.1 280.5,327.5 275.3,317.8 284.1,309.7 298.1,311.2" fill="#f3f962"/>
<polygon points="326.1,314.4 317.2,322.5 303.3,320.9 298.1,311.2 307.0,303.1 321.0,304.7" fill="#f3f962"/>
<polygon points="349.1,308.0 340.1,316.1 326.1,314.4 321.0,304.7 330.0,296.6 344.1,298.2" fill="#f3f962"/>
<polygon points="372.1,301.7 363.1,309.7 349.1,308.0 344.1,298.2 353.1,290.2 367.2,291.9" fill="#f3f962"/>
<polygon points="395.3,295.4 386.1,303.4 372.1,301.7 367.2,291.9 376.3,283.9 390.4,285.7" fill="#d97d9e"/>
<polygon points="418.5,289.3 409.3,297.3 395.3,295.4 390.4,285.7 399.6,277.7 413.7,279.5" fill="#f3f962"/>
<polygon points="441.8,283.3 432.5,291.2 418.5,289.3 413.7,279.5 423.0,271.6 437.1,273.5" fill="#f3f962"/>
<polygon points="465.3,277.4 455.9,285.2 441.8,283.3 437.1,273.5 446.4,265.6 460.6,267.5" fill="#f3f962"/>
<polygon points="488.8,271.5 479.3,279.4 465.3,277.4 460.6,267.5 470.0,259.7 484.2,261.7" fill="#d97d9e"/>
<polygon points="512.4,265.8 502.9,273.6 488.8,271.5 484.2,261.7 493.7,253.9 507.8,255.9" fill="#e8918f"/>
<polygon points="536.1,260.2 526.5,267.9 512.4,265.8 507.8,255.9 517.4,248.1 531.6,250.3" fill="#e8918f"/>
<polygon points="559.9,254.6 550.3,262.3 536.1,260.2 531.6,250.3 541.3,242.5 555.5,244.7" fill="#f3f962"/>
<polygon points="77.7,409.6 69.8,418.1 56.1,417.2 50.3,407.6 58.2,399.0 72.0,400.0" fill="#f3f962"/>
<polygon points="99.5,402.1 91.4,410.6 77.7,409.6 72.0,400.0 80.0,391.5 93.8,392.5" fill="#d97d9e"/>
<polygon points="121.3,394.6 113.2,403.1 99.5,402.1 93.8,392.5 101.9,384.0 115.7,385.0" fill="#af54bd"/>
<polygon points="143.3,387.3 135.1,395.8 121.3,394.6 115.7,385.0 123.9,376.6 137.7,377.7" fill="#c768af"/>
<polygon points="165.3,380.1 157.0,388.5 143.3,387.3 137.7,377.7 146.0,369.3 159.8,370.5" fill="#c768af"/>
<polygon points="187.5,373.0 179.1,381.3 165.3,380.1 159.8,370.5 168.2,362.1 182.0,363.3" fill="#f3f962"/>
<polygon points="209.7,365.9 201.2,374.3 187.5,373.0 182.0,363.3 190.4,355.0 204.3,356.3" fill="#f3f962"/>
<polygon points="232.0,359.0 223.5,367.3 209.7,365.9 204.3,356.3 212.8,348.0 226.7,349.3" fill="#f3f962"/>
<polygon points="254.4,352.2 245.8,360.4 232.0,359.0 226.7,349.3 235.3,341.1 249.2,342.5" fill="#d97d9e"/>
<polygon points="277.0,345.5 268.3,353.7 254.4,352.2 249.2,342.5 257.8,334.3 271.8,335.7" fill="#f3f962"/>
<polygon points="299.6,338.8 290.8,347.0 277.0,345.5 271.8,335.7 280.5,327.5 294.5,329.1" fill="#fbdc64"/>
<polygon points="322.3,332.3 313.4,340.4 299.6,338.8 294.5,329.1 303.3,320.9 317.2,322.5" fill="#fbdc64"/>
<polygon points="345.1,325.8 336.2,333.9 322.3,332.3 317.2,322.5 326.1,314.4 340.1,316.1" fill="#f3f962"/>
<polygon points="368.0,319.5 359.0,327.5 345.1,325.8 340.1,316.1 349.1,308.0 363.1,309.7" fill="#f3f962"/>
<polygon points="391.0,313.2 381.9,321.3 368.0,319.5 363.1,309.7 372.1,301.7 386.1,303.4" fill="#c768af"/>
<polygon points="414.1,307.1 404.9,315.1 391.0,313.2 386.1,303.4 395.3,295.4 409.3,297.3" fill="#f3f962"/>
<polygon points="437.3,301.0 428.1,309.0 414.1,307.1 409.3,297.3 418.5,289.3 432.5,291.2" fill="#f3f962"/>
<polygon points="460.6,295.1 451.3,303.0 437.3,301.0 432.5,291.2 441.8,283.3 455.9,285.2" fill="#f3f962"/>
<polygon points="484.0,289.2 474.6,297.1 460.6,295.1 455.9,285.2 465.3,277.4 479.3,279.4" fill="#f3f962"/>
<polygon points="507.4,283.5 498.0,291.3 484.0,289.2 479.3,279.4 488.8,271.5 502.9,273.6" fill="#e8918f"/>
<polygon points="531.0,277.8 521.5,285.6 507.4,283.5 502.9,273.6 512.4,265.8 526.5,267.9" fill="#e8918f"/>
<polygon points="554.7,272.3 545.1,280.0 531.0,277.8 526.5,267.9 536.1,260.2 550.3,262.3" fill="#d97d9e"/>
<polygon points="75.5,427.7 67.6,436.3 54.0,435.4 48.2,425.8 56.1,417.2 69.8,418.1" fill="#f3f962"/>
<polygon points="97.1,420.2 89.1,428.7 75.5,427.7 69.8,418.1 77.7,409.6 91.4,410.6" fill="#964bc0"/>
<polygon points="118.8,412.7 110.8,421.3 97.1,420.2 91.4,410.6 99.5,402.1 113.2,403.1" fill="#5450a9"/>
<polygon points="140.6,405.4 132.5,413.9 118.8,412.7 113.2,403.1 121.3,394.6 135.1,395.8" fill="#964bc0"/>
<polygon points="162.5,398.2 154.3,406.6 140.6,405.4 135.1,395.8 143.3,387.3 157.0,388.5" fill="#c768af"/>
<polygon points="184.5,391.0 176.2,399.4 162.5,398.2 157.0,388.5 165.3,380.1 179.1,381.3" fill="#f3f962"/>
<polygon points="206.6,384.0 198.2,392.3 184.5,391.0 179.1,381.3 187.5,373.0 201.2,374.3" fill="#f3f962"/>
<polygon points="228.8,377.0 220.3,385.3 206.6,384.0 201.2,374.3 209.7,365.9 223.5,367.3" fill="#f3f962"/>
<polygon points="251.1,370.1 242.5,378.4 228.8,377.0 223.5,367.3 232.0,359.0 245.8,360.4" fill="#d97d9e"/>
<polygon points="273.4,363.4 264.8,371.6 251.1,370.1 245.8,360.4 254.4,352.2 268.3,353.7" fill="#af54bd"/>
<polygon points="295.9,356.7 287.2,364.9 273.4,363.4 268.3,353.7 277.0,345.5 290.8,347.0" fill="#f3f962"/>
<polygon points="318.5,350.2 309.7,358.3 295.9,356.7 290.8,347.0 299.6,338.8 313.4,340.4" fill="#f3f962"/>
<polygon points="341.2,343.7 332.3,351.8 318.5,350.2 313.4,340.4 322.3,332.3 336.2,333.9" fill="#c768af"/>
<polygon points="363.9,337.3 355.0,345.4 341.2,343.7 336.2,333.9 345.1,325.8 359.0,327.5" fill="#c768af"/>
<polygon points="386.8,331.1 377.8,339.1 363.9,337.3 359.0,327.5 368.0,319.5 381.9,321.3" fill="#f4a77f"/>
<polygon points="409.7,324.9 400.6,332.9 386.8,331.1 381.9,321.3 391.0,313.2 404.9,315.1" fill="#fbbf70"/>
<polygon points="432.8,318.8 423.6,326.8 409.7,324.9 404.9,315.1 414.1,307.1 428.1,309.0" fill="#f3f962"/>
<polygon points="455.9,312.8 446.7,320.7 432.8,318.8 428.1,309.0 437.3,301.0 451.3,303.0" fill="#e8918f"/>
<polygon points="479.2,307.0 469.8,314.8 455.9,312.8 451.3,303.0 460.6,295.1 474.6,297.1" fill="#f3f962"/>
<polygon points="502.5,301.2 493.1,309.0 479.2,307.0 474.6,297.1 484.0,289.2 498.0,291.3" fill="#f3f962"/>
<polygon points="525.9,295.5 516.5,303.3 502.5,301.2 498.0,291.3 507.4,283.5 521.5,285.6" fill="#af54bd"/>
<polygon points="549.5,289.9 539.9,297.7 525.9,295.5 521.5,285.6 531.0,277.8 545.1,280.0" fill="#964bc0"/>
<polygon points="573.1,284.4 563.4,292.1 549.5,289.9 545.1,280.0 554.7,272.3 568.7,274.5" fill="#f4a77f"/>
<polygon points="94.8,438.3 86.9,446.9 73.3,445.9 67.6,436.3 75.5,427.7 89.1,428.7" fill="#784db8"/>
<polygon points="116.4,430.9 108.4,439.4 94.8,438.3 89.1,428.7 97.1,420.2 110.8,421.3" fill="#f3f962"/>
<polygon points="138.0,423.5 129.9,432.0 116.4,430.9 110.8,421.3 118.8,412.7 132.5,413.9" fill="#af54bd"/>
<polygon points="159.8,416.2 151.6,424.7 138.0,423.5 132.5,413.9 140.6,405.4 154.3,406.6" fill="#fbdc64"/>
<polygon points="181.6,409.1 173.4,417.5 159.8,416.2 154.3,406.6 162.5,398.2 176.2,399.4" fill="#c768af"/>
<polygon points="203.6,402.0 195.3,410.4 181.6,409.1 176.2,399.4 184.5,391.0 198.2,392.3" fill="#d97d9e"/>
<polygon points="225.6,395.0 217.2,403.3 203.6,402.0 198.2,392.3 206.6,384.0 220.3,385.3" fill="#af54bd"/>
<polygon points="247.7,388.1 239.3,396.4 225.6,395.0 220.3,385.3 228.8,377.0 242.5,378.4" fill="#af54bd"/>
<polygon points="270.0,381.4 261.4,389.6 247.7,388.1 242.5,378.4 251.1,370.1 264.8,371.6" fill="#964bc0"/>
<polygon points="292.3,374.7 283.7,382.9 270.0,381.4 264.8,371.6 273.4,363.4 287.2,364.9" fill="#fbdc64"/>
<polygon points="314.7,368.1 306.0,376.2 292.3,374.7 287.2,364.9 295.9,356.7 309.7,358.3" fill="#d97d9e"/>
<polygon points="337.3,361.6 328.5,369.7 314.7,368.1 309.7,358.3 318.5,350.2 332.3,351.8" fill="#f3f962"/>
<polygon points="359.9,355.2 351.0,363.3 337.3,361.6 332.3,351.8 341.2,343.7 355.0,345.4" fill="#fbdc64"/>
<polygon points="382.6,348.9 373.7,357.0 359.9,355.2 355.0,345.4 363.9,337.3 377.8,339.1" fill="#f3f962"/>
<polygon points="405.4,342.7 396.4,350.7 382.6,348.9 377.8,339.1 386.8,331.1 400.6,332.9" fill="#fbdc64"/>
<polygon points="428.3,336.6 419.2,344.6 405.4,342.7 400.6,332.9 409.7,324.9 423.6,326.8" fill="#fbdc64"/>
<polygon points="451.3,330.6 442.1,338.5 428.3,336.6 423.6,326.8 432.8,318.8 446.7,320.7" fill="#d97d9e"/>
<polygon points="474.4,324.7 465.2,332.6 451.3,330.6 446.7,320.7 455.9,312.8 469.8,314.8" fill="#e8918f"/>
<polygon points="497.6,318.9 488.3,326.8 474.4,324.7 469.8,314.8 479.2,307.0 493.1,309.0" fill="#e8918f"/>
<polygon points="520.9,313.2 511.5,321.0 497.6,318.9 493.1,309.0 502.5,301.2 516.5,303.3" fill="#fbdc64"/>
<polygon points="544.3,307.6 534.8,315.4 520.9,313.2 516.5,303.3 525.9,295.5 539.9,297.7" fill="#784db8"/>
<polygon points="567.8,302.1 558.2,309.8 544.3,307.6 539.9,297.7 549.5,289.9 563.4,292.1" fill="#784db8"/>
<polygon points="591.4,296.7 581.7,304.4 567.8,302.1 563.4,292.1 573.1,284.4 587.1,286.7" fill="#5450a9"/>
<polygon points="92.5,456.5 84.7,465.1 71.2,464.1 65.5,454.5 73.3,445.9 86.9,446.9" fill="#5450a9"/>
<polygon points="113.9,449.0 106.0,457.6 92.5,456.5 86.9,446.9 94.8,438.3 108.4,439.4" fill="#784db8"/>
<polygon points="135.4,441.6 127.4,450.1 113.9,449.0 108.4,439.4 116.4,430.9 129.9,432.0" fill="#784db8"/>
<polygon points="157.1,434.3 149.0,442.8 135.4,441.6 129.9,432.0 138.0,423.5 151.6,424.7" fill="#784db8"/>
<polygon points="178.8,427.1 170.6,435.6 157.1,434.3 151.6,424.7 159.8,416.2 173.4,417.5" fill="#f3f962"/>
<polygon points="200.6,420.0 192.3,428.4 178.8,427.1 173.4,417.5 181.6,409.1 195.3,410.4" fill="#5450a9"/>
<polygon points="222.5,413.0 214.1,421.4 200.6,420.0 195.3,410.4 203.6,402.0 217.2,403.3" fill="#f3f962"/>
<polygon points="244.5,406.1 236.1,414.4 222.5,413.0 217.2,403.3 225.6,395.0 239.3,396.4" fill="#c768af"/>
<polygon points="266.6,399.3 258.1,407.6 244.5,406.1 239.3,396.4 247.7,388.1 261.4,389.6" fill="#784db8"/>
<polygon points="288.8,392.6 280.2,400.9 266.6,399.3 261.4,389.6 270.0,381.4 283.7,382.9" fill="#f4a77f"/>
<polygon points="311.0,386.0 302.4,394.2 288.8,392.6 283.7,382.9 292.3,374.7 306.0,376.2" fill="#f3f962"/>
<polygon points="333.4,379.5 324.7,387.7 311.0,386.0 306.0,376.2 314.7,368.1 328.5,369.7" fill="#f3f962"/>
<polygon points="355.9,373.1 347.1,381.2 333.4,379.5 328.5,369.7 337.3,361.6 351.0,363.3" fill="#f3f962"/>
<polygon points="378.5,366.8 369.6,374.8 355.9,373.1 351.0,363.3 359.9,355.2 373.7,357.0" fill="#f3f962"/>
<polygon points="401.1,360.6 392.2,368.6 378.5,366.8 373.7,357.0 382.6,348.9 396.4,350.7" fill="#f3f962"/>
<polygon points="423.9,354.4 414.9,362.4 401.1,360.6 396.4,350.7 405.4,342.7 419.2,344.6" fill="#f3f962"/>
<polygon points="446.8,348.4 437.6,356.4 423.9,354.4 419.2,344.6 428.3,336.6 442.1,338.5" fill="#e8918f"/>
<polygon points="469.7,342.5 460.5,350.4 446.8,348.4 442.1,338.5 451.3,330.6 465.2,332.6" fill="#fbbf70"/>
<polygon points="492.8,336.7 483.5,344.5 469.7,342.5 465.2,332.6 474.4,324.7 488.3,326.8" fill="#f3f962"/>
<polygon points="515.9,330.9 506.6,338.8 492.8,336.7 488.3,326.8 497.6,318.9 511.5,321.0" fill="#f3f962"/>
<polygon points="539.2,325.3 529.7,333.1 515.9,330.9 511.5,321.0 520.9,313.2 534.8,315.4" fill="#784db8"/>
<polygon points="562.5,319.8 553.0,327.5 539.2,325.3 534.8,315.4 544.3,307.6 558.2,309.8" fill="#5450a9"/>
<polygon points="586.0,314.3 576.4,322.0 562.5,319.8 558.2,309.8 567.8,302.1 581.7,304.4" fill="#5450a9"/>
<polygon points="90.3,474.7 82.5,483.3 69.1,482.3 63.4,472.7 71.2,464.1 84.7,465.1" fill="#784db8"/>
<polygon points="111.6,467.2 103.7,475.8 90.3,474.7 84.7,465.1 92.5,456.5 106.0,457.6" fill="#784db8"/>
<polygon points="132.9,459.8 125.0,468.3 111.6,467.2 106.0,457.6 113.9,449.0 127.4,450.1" fill="#784db8"/>
<polygon points="154.4,452.5 146.4,460.9 132.9,459.8 127.4,450.1 135.4,441.6 149.0,442.8" fill="#784db8"/>
<polygon points="176.0,445.2 167.9,453.7 154.4,452.5 149.0,442.8 157.1,434.3 170.6,435.6" fill="#784db8"/>
<polygon points="197.6,438.1 189.4,446.5 176.0,445.2 170.6,435.6 178.8,427.1 192.3,428.4" fill="#af54bd"/>
<polygon points="219.4,431.1 211.1,439.5 197.6,438.1 192.3,428.4 200.6,420.0 214.1,421.4" fill="#af54bd"/>
<polygon points="241.2,424.2 232.9,432.5 219.4,431.1 214.1,421.4 222.5,413.0 236.1,414.4" fill="#d97d9e"/>
<polygon points="263.2,417.4 254.8,425.6 241.2,424.2 236.1,414.4 244.5,406.1 258.1,407.6" fill="#af54bd"/>
<polygon points="285.2,410.6 276.7,418.9 263.2,417.4 258.1,407.6 266.6,399.3 280.2,400.9" fill="#784db8"/>
<polygon points="307.4,404.0 298.8,412.2 285.2,410.6 280.2,400.9 288.8,392.6 302.4,394.2" fill="#784db8"/>
<polygon points="329.6,397.5 321.0,405.6 307.4,404.0 302.4,394.2 311.0,386.0 324.7,387.7" fill="#f3f962"/>
<polygon points="352.0,391.0 343.2,399.1 329.6,397.5 324.7,387.7 333.4,379.5 347.1,381.2" fill="#f3f962"/>
<polygon points="374.4,384.7 365.6,392.8 352.0,391.0 347.1,381.2 355.9,373.1 369.6,374.8" fill="#f4a77f"/>
<polygon points="396.9,378.4 388.0,386.5 374.4,384.7 369.6,374.8 378.5,366.8 392.2,368.6" fill="#d97d9e"/>
<polygon points="419.5,372.3 410.6,380.3 396.9,378.4 392.2,368.6 401.1,360.6 414.9,362.4" fill="#f3f962"/>
<polygon points="442.3,366.2 433.2,374.2 419.5,372.3 414.9,362.4 423.9,354.4 437.6,356.4" fill="#f3f962"/>
<polygon points="465.1,360.3 455.9,368.2 442.3,366.2 437.6,356.4 446.8,348.4 460.5,350.4" fill="#f3f962"/>
<polygon points="488.0,354.4 478.8,362.3 465.1,360.3 460.5,350.4 469.7,342.5 483.5,344.5" fill="#f3f962"/>
<polygon points="534.1,343.0 524.7,350.8 511.0,348.7 506.6,338.8 515.9,330.9 529.7,333.1" fill="#5450a9"/>
<polygon points="88.1,492.9 80.4,501.6 67.1,500.6 61.4,491.0 69.1,482.3 82.5,483.3" fill="#e8918f"/>
<polygon points="109.2,485.4 101.4,494.0 88.1,492.9 82.5,483.3 90.3,474.7 103.7,475.8" fill="#964bc0"/>
<polygon points="130.5,478.0 122.6,486.5 109.2,485.4 103.7,475.8 111.6,467.2 125.0,468.3" fill="#c768af"/>
<polygon points="151.8,470.6 143.8,479.1 130.5,478.0 125.0,468.3 132.9,459.8 146.4,460.9" fill="#f4a77f"/>
<polygon points="173.2,463.4 165.2,471.8 151.8,470.6 146.4,460.9 154.4,452.5 167.9,453.7" fill="#964bc0"/>
<polygon points="194.7,456.2 186.6,464.7 173.2,463.4 167.9,453.7 176.0,445.2 189.4,446.5" fill="#784db8"/>
<polygon points="216.4,449.2 208.2,457.6 194.7,456.2 189.4,446.5 197.6,438.1 211.1,439.5" fill="#964bc0"/>
<polygon points="238.1,442.2 229.8,450.6 216.4,449.2 211.1,439.5 219.4,431.1 232.9,432.5" fill="#784db8"/>
<polygon points="259.9,435.4 251.5,443.7 238.1,442.2 232.9,432.5 241.2,424.2 254.8,425.6" fill="#784db8"/>
<polygon points="281.8,428.6 273.3,436.9 259.9,435.4 254.8,425.6 263.2,417.4 276.7,418.9" fill="#784db8"/>
<polygon points="303.8,422.0 295.3,430.2 281.8,428.6 276.7,418.9 285.2,410.6 298.8,412.2" fill="#c768af"/>
<polygon points="325.9,415.4 317.3,423.6 303.8,422.0 298.8,412.2 307.4,404.0 321.0,405.6" fill="#af54bd"/>
<polygon points="348.1,409.0 339.4,417.1 325.9,415.4 321.0,405.6 329.6,397.5 343.2,399.1" fill="#d97d9e"/>
<polygon points="370.4,402.6 361.6,410.7 348.1,409.0 343.2,399.1 352.0,391.0 365.6,392.8" fill="#f3f962"/>
<polygon points="392.7,396.3 383.9,404.4 370.4,402.6 365.6,392.8 374.4,384.7 388.0,386.5" fill="#d97d9e"/>
<polygon points="415.2,390.2 406.3,398.2 392.7,396.3 388.0,386.5 396.9,378.4 410.6,380.3" fill="#fbbf70"/>
<polygon points="437.8,384.1 428.8,392.1 415.2,390.2 410.6,380.3 419.5,372.3 433.2,374.2" fill="#f3f962"/>
<polygon points="483.2,372.3 474.1,380.1 460.5,378.1 455.9,368.2 465.1,360.3 478.8,362.3" fill="#5450a9"/>
<polygon points="86.0,511.2 78.3,519.8 65.1,518.8 59.4,509.2 67.1,500.6 80.4,501.6" fill="#f3f962"/>
<polygon points="106.9,503.6 99.2,512.2 86.0,511.2 80.4,501.6 88.1,492.9 101.4,494.0" fill="#f3f962"/>
<polygon points="128.0,496.2 120.2,504.7 106.9,503.6 101.4,494.0 109.2,485.4 122.6,486.5" fill="#e8918f"/>
<polygon points="149.2,488.8 141.3,497.3 128.0,496.2 122.6,486.5 130.5,478.0 143.8,479.1" fill="#964bc0"/>
<polygon points="170.5,481.5 162.5,490.0 149.2,488.8 143.8,479.1 151.8,470.6 165.2,471.8" fill="#964bc0"/>
<polygon points="191.9,474.4 183.8,482.8 170.5,481.5 165.2,471.8 173.2,463.4 186.6,464.7" fill="#784db8"/>
<polygon points="213.4,467.3 205.2,475.7 191.9,474.4 186.6,464.7 194.7,456.2 208.2,457.6" fill="#fbbf70"/>
<polygon points="234.9,460.3 226.7,468.7 213.4,467.3 208.2,457.6 216.4,449.2 229.8,450.6" fill="#964bc0"/>
<polygon points="256.6,453.5 248.3,461.8 234.9,460.3 229.8,450.6 238.1,442.2 251.5,443.7" fill="#964bc0"/>
<polygon points="278.4,446.7 270.0,455.0 256.6,453.5 251.5,443.7 259.9,435.4 273.3,436.9" fill="#964bc0"/>
<polygon points="300.2,440.0 291.8,448.2 278.4,446.7 273.3,436.9 281.8,428.6 295.3,430.2" fill="#964bc0"/>
<polygon points="322.2,433.4 313.6,441.6 300.2,440.0 295.3,430.2 303.8,422.0 317.3,423.6" fill="#c768af"/>
<polygon points="344.2,426.9 335.6,435.1 322.2,433.4 317.3,423.6 325.9,415.4 339.4,417.1" fill="#f3f962"/>
<polygon points="366.4,420.6 357.7,428.7 344.2,426.9 339.4,417.1 348.1,409.0 361.6,410.7" fill="#f3f962"/>
<polygon points="388.6,414.3 379.8,422.3 366.4,420.6 361.6,410.7 370.4,402.6 383.9,404.4" fill="#f3f962"/>
<polygon points="411.0,408.1 402.1,416.1 388.6,414.3 383.9,404.4 392.7,396.3 406.3,398.2" fill="#784db8"/>
<polygon points="104.7,521.9 97.0,530.5 83.9,529.5 78.3,519.8 86.0,511.2 99.2,512.2" fill="#fbdc64"/>
<polygon points="125.7,514.4 117.9,523.0 104.7,521.9 99.2,512.2 106.9,503.6 120.2,504.7" fill="#e8918f"/>
<polygon points="146.7,507.0 138.9,515.5 125.7,514.4 120.2,504.7 128.0,496.2 141.3,497.3" fill="#e8918f"/>
<polygon points="167.8,499.7 159.9,508.2 146.7,507.0 141.3,497.3 149.2,488.8 162.5,490.0" fill="#f3f962"/>
<polygon points="189.1,492.5 181.1,501.0 167.8,499.7 162.5,490.0 170.5,481.5 183.8,482.8" fill="#964bc0"/>
<polygon points="210.4,485.4 202.3,493.9 189.1,492.5 183.8,482.8 191.9,474.4 205.2,475.7" fill="#964bc0"/>
<polygon points="231.8,478.4 223.7,486.8 210.4,485.4 205.2,475.7 213.4,467.3 226.7,468.7" fill="#d97d9e"/>
<polygon points="253.4,471.6 245.1,479.9 231.8,478.4 226.7,468.7 234.9,460.3 248.3,461.8" fill="#964bc0"/>
<polygon points="275.0,464.8 266.7,473.0 253.4,471.6 248.3,461.8 256.6,453.5 270.0,455.0" fill="#964bc0"/>
<polygon points="296.7,458.0 288.3,466.3 275.0,464.8 270.0,455.0 278.4,446.7 291.8,448.2" fill="#784db8"/>
<polygon points="318.5,451.4 310.0,459.7 296.7,458.0 291.8,448.2 300.2,440.0 313.6,441.6" fill="#964bc0"/>
<polygon points="340.4,444.9 331.9,453.1 318.5,451.4 313.6,441.6 322.2,433.4 335.6,435.1" fill="#f3f962"/>
<polygon points="362.4,438.5 353.8,446.7 340.4,444.9 335.6,435.1 344.2,426.9 357.7,428.7" fill="#f3f962"/>
<polygon points="144.2,525.2 136.5,533.8 123.3,532.7 117.9,523.0 125.7,514.4 138.9,515.5" fill="#f3f962"/>
<polygon points="165.2,517.9 157.4,526.4 144.2,525.2 138.9,515.5 146.7,507.0 159.9,508.2" fill="#f4a77f"/>
<polygon points="186.3,510.7 178.4,519.2 165.2,517.9 159.9,508.2 167.8,499.7 181.1,501.0" fill="#f3f962"/>
<polygon points="207.5,503.6 199.5,512.0 186.3,510.7 181.1,501.0 189.1,492.5 202.3,493.9" fill="#fbbf70"/>
<polygon points="228.8,496.6 220.7,505.0 207.5,503.6 202.3,493.9 210.4,485.4 223.7,486.8" fill="#d97d9e"/>
<polygon points="250.2,489.7 242.0,498.0 228.8,496.6 223.7,486.8 231.8,478.4 245.1,479.9" fill="#c768af"/>
<polygon points="271.7,482.8 263.4,491.1 250.2,489.7 245.1,479.9 253.4,471.6 266.7,473.0" fill="#964bc0"/>
<polygon points="293.2,476.1 284.9,484.4 271.7,482.8 266.7,473.0 275.0,464.8 288.3,466.3" fill="#784db8"/>
<polygon points="314.9,469.5 306.5,477.7 293.2,476.1 288.3,466.3 296.7,458.0 310.0,459.7" fill="#964bc0"/>
<polygon points="336.7,463.0 328.2,471.1 314.9,469.5 310.0,459.7 318.5,451.4 331.9,453.1" fill="#5450a9"/>
<polygon points="162.7,536.2 154.9,544.7 141.8,543.5 136.5,533.8 144.2,525.2 157.4,526.4" fill="#c768af"/>
<polygon points="183.6,528.9 175.7,537.4 162.7,536.2 157.4,526.4 165.2,517.9 178.4,519.2" fill="#964bc0"/>
<polygon points="204.7,521.8 196.7,530.2 183.6,528.9 178.4,519.2 186.3,510.7 199.5,512.0" fill="#f3f962"/>
<polygon points="225.8,514.8 217.8,523.2 204.7,521.8 199.5,512.0 207.5,503.6 220.7,505.0" fill="#f3f962"/>
<polygon points="247.0,507.8 238.9,516.2 225.8,514.8 220.7,505.0 228.8,496.6 242.0,498.0" fill="#f3f962"/>
<polygon points="268.4,501.0 260.2,509.3 247.0,507.8 242.0,498.0 250.2,489.7 263.4,491.1" fill="#f3f962"/>
<polygon points="289.8,494.2 281.5,502.5 268.4,501.0 263.4,491.1 271.7,482.8 284.9,484.4" fill="#f3f962"/>
<polygon points="311.3,487.6 303.0,495.8 289.8,494.2 284.9,484.4 293.2,476.1 306.5,477.7" fill="#f3f962"/>
<polygon points="333.0,481.0 324.5,489.2 311.3,487.6 306.5,477.7 314.9,469.5 328.2,471.1" fill="#d97d9e"/>
<polygon points="160.1,554.4 152.4,563.0 139.4,561.8 134.1,552.1 141.8,543.5 154.9,544.7" fill="#5450a9"/>
<polygon points="180.9,547.2 173.1,555.7 160.1,554.4 154.9,544.7 162.7,536.2 175.7,537.4" fill="#784db8"/>
<polygon points="201.9,540.0 194.0,548.5 180.9,547.2 175.7,537.4 183.6,528.9 196.7,530.2" fill="#f3f962"/>
<polygon points="222.9,532.9 214.9,541.4 201.9,540.0 196.7,530.2 204.7,521.8 217.8,523.2" fill="#f3f962"/>
<polygon points="244.0,526.0 235.9,534.4 222.9,532.9 217.8,523.2 225.8,514.8 238.9,516.2" fill="#f3f962"/>
<polygon points="265.1,519.1 257.0,527.4 244.0,526.0 238.9,516.2 247.0,507.8 260.2,509.3" fill="#f3f962"/>
<polygon points="286.4,512.3 278.2,520.6 265.1,519.1 260.2,509.3 268.4,501.0 281.5,502.5" fill="#f3f962"/>
<polygon points="307.8,505.7 299.5,513.9 286.4,512.3 281.5,502.5 289.8,494.2 303.0,495.8" fill="#f3f962"/>
<polygon points="329.3,499.1 320.9,507.3 307.8,505.7 303.0,495.8 311.3,487.6 324.5,489.2" fill="#c768af"/>
<polygon points="178.3,565.4 170.6,574.0 157.7,572.7 152.4,563.0 160.1,554.4 173.1,555.7" fill="#f3f962"/>
<polygon points="199.1,558.3 191.3,566.7 178.3,565.4 173.1,555.7 180.9,547.2 194.0,548.5" fill="#f3f962"/>
<polygon points="219.9,551.2 212.0,559.6 199.1,558.3 194.0,548.5 201.9,540.0 214.9,541.4" fill="#f3f962"/>
<polygon points="240.9,544.2 232.9,552.6 219.9,551.2 214.9,541.4 222.9,532.9 235.9,534.4" fill="#f3f962"/>
<polygon points="262.0,537.3 253.9,545.6 240.9,544.2 235.9,534.4 244.0,526.0 257.0,527.4" fill="#f3f962"/>
<polygon points="283.1,530.5 275.0,538.8 262.0,537.3 257.0,527.4 265.1,519.1 278.2,520.6" fill="#f3f962"/>
<polygon points="304.3,523.8 296.1,532.1 283.1,530.5 278.2,520.6 286.4,512.3 299.5,513.9" fill="#f3f962"/>
<polygon points="325.7,517.2 317.4,525.4 304.3,523.8 299.5,513.9 307.8,505.7 320.9,507.3" fill="#f3f962"/>
<polygon points="217.1,569.4 209.2,577.9 196.4,576.5 191.3,566.7 199.1,558.3 212.0,559.6" fill="#f3f962"/>
<polygon points="237.9,562.4 230.0,570.8 217.1,569.4 212.0,559.6 219.9,551.2 232.9,552.6" fill="#f3f962"/>
<polygon points="258.8,555.5 250.8,563.8 237.9,562.4 232.9,552.6 240.9,544.2 253.9,545.6" fill="#f3f962"/>
<polygon points="279.8,548.7 271.7,557.0 258.8,555.5 253.9,545.6 262.0,537.3 275.0,538.8" fill="#f3f962"/>
<polygon points="300.9,541.9 292.8,550.2 279.8,548.7 275.0,538.8 283.1,530.5 296.1,532.1" fill="#d97d9e"/>
<polygon points="322.1,535.3 313.9,543.6 300.9,541.9 296.1,532.1 304.3,523.8 317.4,525.4" fill="#f3f962"/>
<polygon points="255.7,573.7 247.8,582.1 235.0,580.6 230.0,570.8 237.9,562.4 250.8,563.8" fill="#f3f962"/>
<polygon points="276.6,566.9 268.6,575.2 255.7,573.7 250.8,563.8 258.8,555.5 271.7,557.0" fill="#f3f962"/>
<polygon points="297.5,560.1 289.4,568.4 276.6,566.9 271.7,557.0 279.8,548.7 292.8,550.2" fill="#f3f962"/>
<polygon points="318.6,553.5 310.4,561.7 297.5,560.1 292.8,550.2 300.9,541.9 313.9,543.6" fill="#f3f962"/>
<polygon points="339.8,546.9 331.5,555.1 318.6,553.5 313.9,543.6 322.1,535.3 335.1,537.0" fill="#e8918f"/>
<polygon points="273.4,585.1 265.4,593.4 252.7,591.9 247.8,582.1 255.7,573.7 268.6,575.2" fill="#fbbf70"/>
<polygon points="294.2,578.3 286.2,586.6 273.4,585.1 268.6,575.2 276.6,566.9 289.4,568.4" fill="#f3f962"/>
<polygon points="315.1,571.6 307.0,579.9 294.2,578.3 289.4,568.4 297.5,560.1 310.4,561.7" fill="#af54bd"/>
<polygon points="336.1,565.1 327.9,573.3 315.1,571.6 310.4,561.7 318.6,553.5 331.5,555.1" fill="#f3f962"/>
<polygon points="270.2,603.3 262.4,611.7 249.7,610.2 244.8,600.4 252.7,591.9 265.4,593.4" fill="#f3f962"/>
<polygon points="290.9,596.5 283.0,604.9 270.2,603.3 265.4,593.4 273.4,585.1 286.2,586.6" fill="#f3f962"/>
<polygon points="311.7,589.9 303.6,598.1 290.9,596.5 286.2,586.6 294.2,578.3 307.0,579.9" fill="#f3f962"/>
<polygon points="332.6,583.3 324.4,591.5 311.7,589.9 307.0,579.9 315.1,571.6 327.9,573.3" fill="#f3f962"/>
<polygon points="353.5,576.8 345.3,585.0 332.6,583.3 327.9,573.3 336.1,565.1 349.0,566.8" fill="#af54bd"/>
<polygon points="267.1,621.6 259.3,630.0 246.7,628.5 241.9,618.6 249.7,610.2 262.4,611.7" fill="#f3f962"/>
<polygon points="287.7,614.8 279.8,623.2 267.1,621.6 262.4,611.7 270.2,603.3 283.0,604.9" fill="#f3f962"/>
<polygon points="308.3,608.1 300.3,616.4 287.7,614.8 283.0,604.9 290.9,596.5 303.6,598.1" fill="#f3f962"/>
<polygon points="329.0,601.5 321.0,609.7 308.3,608.1 303.6,598.1 311.7,589.9 324.4,591.5" fill="#f3f962"/>
<polygon points="349.9,594.9 341.7,603.2 329.0,601.5 324.4,591.5 332.6,583.3 345.3,585.0" fill="#f3f962"/>
<polygon points="264.1,639.9 256.3,648.3 243.8,646.8 239.0,637.0 246.7,628.5 259.3,630.0" fill="#fbdc64"/>
<polygon points="284.5,633.1 276.6,641.4 264.1,639.9 259.3,630.0 267.1,621.6 279.8,623.2" fill="#f3f962"/>
<polygon points="305.0,626.3 297.0,634.7 284.5,633.1 279.8,623.2 287.7,614.8 300.3,616.4" fill="#f3f962"/>
<polygon points="325.6,619.7 317.6,628.0 305.0,626.3 300.3,616.4 308.3,608.1 321.0,609.7" fill="#fbbf70"/>
<polygon points="346.2,613.1 338.2,621.4 325.6,619.7 321.0,609.7 329.0,601.5 341.7,603.2" fill="#f3f962"/>
<polygon points="367.0,606.7 358.8,614.9 346.2,613.1 341.7,603.2 349.9,594.9 362.5,596.7" fill="#e8918f"/>
<polygon points="281.3,651.4 273.6,659.8 261.1,658.2 256.3,648.3 264.1,639.9 276.6,641.4" fill="#f3f962"/>
<polygon points="301.7,644.6 293.8,653.0 281.3,651.4 276.6,641.4 284.5,633.1 297.0,634.7" fill="#d97d9e"/>
<polygon points="322.1,638.0 314.2,646.3 301.7,644.6 297.0,634.7 305.0,626.3 317.6,628.0" fill="#f3f962"/>
<polygon points="342.7,631.4 334.6,639.6 322.1,638.0 317.6,628.0 325.6,619.7 338.2,621.4" fill="#784db8"/>
<polygon points="363.3,624.9 355.2,633.1 342.7,631.4 338.2,621.4 346.2,613.1 358.8,614.9" fill="#f3f962"/>
<polygon points="278.2,669.7 270.5,678.1 258.1,676.6 253.4,666.7 261.1,658.2 273.6,659.8" fill="#784db8"/>
<polygon points="298.4,662.9 290.6,671.3 278.2,669.7 273.6,659.8 281.3,651.4 293.8,653.0" fill="#f3f962"/>
<polygon points="318.7,656.2 310.9,664.6 298.4,662.9 293.8,653.0 301.7,644.6 314.2,646.3" fill="#d97d9e"/>
<polygon points="339.1,649.6 331.2,657.9 318.7,656.2 314.2,646.3 322.1,638.0 334.6,639.6" fill="#c768af"/>
<polygon points="359.6,643.2 351.6,651.4 339.1,649.6 334.6,639.6 342.7,631.4 355.2,633.1" fill="#f3f962"/>
<polygon points="380.2,636.8 372.1,645.0 359.6,643.2 355.2,633.1 363.3,624.9 375.8,626.7" fill="#af54bd"/>
<polygon points="295.2,681.3 287.5,689.6 275.2,688.1 270.5,678.1 278.2,669.7 290.6,671.3" fill="#f3f962"/>
<polygon points="315.4,674.5 307.6,682.9 295.2,681.3 290.6,671.3 298.4,662.9 310.9,664.6" fill="#f3f962"/>
<polygon points="335.7,667.9 327.8,676.2 315.4,674.5 310.9,664.6 318.7,656.2 331.2,657.9" fill="#af54bd"/>
<polygon points="356.0,661.4 348.0,669.7 335.7,667.9 331.2,657.9 339.1,649.6 351.6,651.4" fill="#af54bd"/>
<polygon points="376.4,655.0 368.4,663.2 356.0,661.4 351.6,651.4 359.6,643.2 372.1,645.0" fill="#f3f962"/>
<polygon points="312.1,692.9 304.4,701.2 292.1,699.6 287.5,689.6 295.2,681.3 307.6,682.9" fill="#f3f962"/>
<polygon points="332.2,686.2 324.4,694.6 312.1,692.9 307.6,682.9 315.4,674.5 327.8,676.2" fill="#e8918f"/>
<polygon points="352.4,679.7 344.5,688.0 332.2,686.2 327.8,676.2 335.7,667.9 348.0,669.7" fill="#c768af"/>
<polygon points="372.7,673.3 364.7,681.5 352.4,679.7 348.0,669.7 356.0,661.4 368.4,663.2" fill="#f3f962"/>
<polygon points="393.1,666.9 385.1,675.1 372.7,673.3 368.4,663.2 376.4,655.0 388.9,656.8" fill="#784db8"/>
<polygon points="308.9,711.2 301.2,719.6 289.0,718.0 284.4,708.0 292.1,699.6 304.4,701.2" fill="#af54bd"/>
<polygon points="328.8,704.6 321.1,712.9 308.9,711.2 304.4,701.2 312.1,692.9 324.4,694.6" fill="#964bc0"/>
<polygon points="348.9,698.0 341.0,706.3 328.8,704.6 324.4,694.6 332.2,686.2 344.5,688.0" fill="#5450a9"/>
<polygon points="369.1,691.5 361.1,699.8 348.9,698.0 344.5,688.0 352.4,679.7 364.7,681.5" fill="#f3f962"/>
<polygon points="389.3,685.2 381.3,693.4 369.1,691.5 364.7,681.5 372.7,673.3 385.1,675.1" fill="#f3f962"/>
<polygon points="325.5,722.9 317.8,731.3 305.7,729.6 301.2,719.6 308.9,711.2 321.1,712.9" fill="#f3f962"/>
<polygon points="345.4,716.4 337.6,724.7 325.5,722.9 321.1,712.9 328.8,704.6 341.0,706.3" fill="#f3f962"/>
<polygon points="365.4,709.9 357.6,718.1 345.4,716.4 341.0,706.3 348.9,698.0 361.1,699.8" fill="#f3f962"/>
<polygon points="385.5,703.5 377.6,711.7 365.4,709.9 361.1,699.8 369.1,691.5 381.3,693.4" fill="#f3f962"/>
<polygon points="381.8,721.8 373.9,730.0 361.8,728.2 357.6,718.1 365.4,709.9 377.6,711.7" fill="#f3f962"/>
</g>
<g opacity="0.7">
<path d="M717.6,335.1 L704.6,332.1 L692.5,329.1 L668.4,327.1 L598.2,328.5 L584.1,330.1 L563.1,331.3 L533.0,332.2 L510.4,336.0 L491.6,339.8 L476.5,343.5 L457.7,350.1 L438.8,353.9 L420.0,355.8 L404.6,358.8 L392.5,370.1 L386.5,383.7 L368.4,388.2 L344.3,389.7 L330.8,395.7 L320.2,407.8 L305.2,419.8 L282.6,430.4 L270.0,436.0 L255.4,442.0 L234.3,452.6 L216.3,467.7 L199.7,484.2 L184.6,502.3 L172.6,517.3 L159.0,535.4 L150.0,547.5 L146.3,562.6 L142.5,572.6 L141.9,597.7 L146.3,607.8 L155.1,617.8 L165.1,627.8 L177.7,634.1 L189.0,636.6 L200.0,637.2 L209.9,633.4 L223.4,626.6 L234.7,618.7 L243.8,610.8 L248.3,605.2 L255.0,593.9 L261.8,584.8 L273.1,569.0 L279.9,560.0 L286.8,549.1 L297.8,531.1 L308.9,521.4 L325.4,515.2 L339.7,507.2 L369.6,489.3 L399.4,471.3 L438.8,455.6 L467.1,442.4 L495.3,431.1 L525.5,422.6 L540.5,418.9 L572.0,419.4 L602.2,420.4 L614.2,426.5 L620.2,434.5 L628.3,443.5 L640.3,441.5 L660.4,441.5 L676.5,444.5 L700.6,448.6 L717.6,453.6 L730.0,454.0 L730.0,335.0 Z" fill="#440154" stroke="#000" stroke-width="1.0"/>
<path d="M195.0,623.0 L190.0,623.2 L180.0,621.6 L171.5,617.7 L163.5,610.3 L157.0,601.8 L154.6,595.5 L154.9,585.5 L156.2,576.0 L166.0,554.7 L189.6,526.0 L206.0,508.8 L247.0,470.5 L262.4,460.0 L313.7,431.5 L328.5,421.2 L341.2,410.5 L344.0,409.0 L351.5,406.0 L372.5,402.1 L394.5,396.9 L402.0,392.9 L412.5,383.6 L416.5,381.5 L444.0,377.1 L467.5,374.7 L474.5,379.3 L481.6,386.5 L483.4,390.0 L483.0,393.0 L478.9,401.0 L474.0,408.4 L473.5,410.4 L456.5,419.9 L419.0,435.2 L386.5,454.5 L327.5,483.8 L315.0,492.1 L296.5,502.6 L282.3,519.0 L272.0,535.8 L264.6,550.0 L253.3,568.0 L231.8,598.0 L225.5,604.2 L214.5,613.3 L204.5,619.7 L198.0,622.7 L195.0,623.0Z" fill="#482173" stroke="#000" stroke-width="1.3"/>
<path d="M195.0,619.0 L190.5,619.4 L182.0,618.5 L173.5,615.0 L166.0,608.2 L160.0,599.9 L158.2,594.5 L158.6,586.0 L160.2,577.0 L170.5,556.9 L196.0,526.7 L210.5,512.4 L225.6,499.5 L251.0,476.3 L265.0,465.9 L303.0,443.7 L317.5,436.6 L347.5,418.7 L351.0,417.2 L393.0,410.0 L407.5,406.6 L411.5,403.5 L417.3,394.0 L420.0,391.9 L422.5,390.8 L426.0,390.6 L429.5,391.4 L440.5,397.2 L444.0,397.4 L450.0,396.6 L454.0,397.0 L450.5,399.5 L443.0,402.9 L429.5,410.9 L422.0,413.0 L411.5,414.3 L406.1,418.5 L399.3,425.0 L368.0,448.3 L323.0,474.6 L311.0,483.8 L291.0,497.4 L277.2,516.0 L267.6,532.5 L260.4,547.0 L248.4,567.0 L237.0,582.0 L230.0,592.3 L222.5,600.4 L212.0,609.5 L202.6,616.0 L197.5,618.5 L195.0,619.0Z" fill="#433e85" stroke="#000" stroke-width="1.3"/>
<path d="M193.0,615.5 L183.5,615.3 L175.5,612.4 L172.0,609.8 L168.1,606.0 L162.7,598.0 L161.5,594.0 L161.7,589.0 L164.2,577.5 L174.7,559.0 L200.6,529.0 L214.5,516.0 L230.5,503.1 L254.5,481.9 L267.5,471.6 L306.5,448.4 L339.7,434.0 L352.5,424.9 L357.5,423.5 L361.0,423.5 L370.5,426.0 L368.2,435.5 L366.4,438.5 L363.5,441.5 L358.5,444.0 L346.5,445.9 L341.2,448.5 L317.5,465.6 L307.0,475.3 L286.0,492.2 L272.9,512.5 L263.7,529.0 L255.3,546.5 L245.0,564.2 L226.3,589.5 L219.5,597.0 L209.5,606.0 L199.0,613.5 L193.0,615.5Z" fill="#38588c" stroke="#000" stroke-width="1.3"/>
<path d="M357.5,437.6 L354.0,437.3 L349.9,435.0 L352.1,432.0 L355.0,429.8 L358.0,429.0 L361.0,429.3 L361.7,431.5 L361.2,434.5 L359.7,436.5 L357.5,437.6Z" fill="#2d708e" stroke="#000" stroke-width="1.3"/>
<path d="M192.0,612.0 L185.0,612.3 L176.5,609.5 L170.2,604.0 L167.0,599.5 L164.9,594.5 L165.1,587.5 L167.5,579.4 L179.0,560.6 L204.3,532.0 L218.5,519.3 L235.0,506.7 L270.5,476.8 L309.0,453.8 L320.0,449.7 L320.5,450.0 L310.9,456.5 L291.0,478.0 L281.0,487.3 L259.7,526.0 L251.9,543.5 L242.7,560.0 L222.4,587.5 L211.0,599.1 L200.5,608.0 L196.0,610.9 L192.0,612.0Z" fill="#2d708e" stroke="#000" stroke-width="1.3"/>
<path d="M188.5,609.0 L181.0,608.2 L175.5,605.3 L170.4,599.5 L167.7,593.0 L168.5,587.0 L170.5,581.5 L182.5,563.0 L207.7,535.0 L222.5,522.2 L239.5,510.0 L274.5,481.1 L281.0,477.3 L275.7,483.0 L256.0,523.2 L247.9,542.0 L238.3,559.5 L219.0,585.0 L213.0,591.5 L196.4,606.5 L193.5,608.0 L188.5,609.0Z" fill="#25858e" stroke="#000" stroke-width="1.3"/>
<path d="M187.0,606.0 L181.5,605.4 L178.0,603.8 L174.5,600.7 L171.9,596.5 L170.7,592.5 L171.0,589.5 L172.5,585.1 L175.5,579.9 L186.5,564.5 L211.0,537.9 L226.5,525.0 L243.5,513.4 L261.9,499.5 L252.3,520.5 L244.6,539.5 L235.4,557.0 L215.5,582.9 L206.4,592.5 L194.5,603.6 L191.0,605.1 L187.0,606.0Z" fill="#1e9b8a" stroke="#000" stroke-width="1.3"/>
<path d="M186.0,603.0 L182.0,602.7 L178.5,601.0 L176.0,598.5 L174.1,594.5 L173.7,591.0 L174.4,588.5 L179.3,580.5 L190.5,566.0 L214.4,540.5 L230.0,528.0 L249.5,515.2 L249.9,515.5 L241.4,537.0 L231.5,556.0 L212.3,580.5 L201.6,592.0 L192.0,600.8 L189.0,602.4 L186.0,603.0Z" fill="#2ab07f" stroke="#000" stroke-width="1.3"/>
<path d="M186.5,600.1 L184.0,600.4 L181.5,599.9 L177.9,597.0 L176.7,594.5 L176.4,592.0 L178.0,587.9 L193.8,568.0 L217.2,543.5 L232.0,532.0 L241.5,525.8 L238.1,535.0 L229.0,553.5 L206.0,581.9 L194.0,594.7 L189.0,598.9 L186.5,600.1Z" fill="#52c569" stroke="#000" stroke-width="1.3"/>
<path d="M185.0,598.1 L181.5,597.6 L179.3,595.5 L178.7,592.5 L179.9,589.5 L199.3,567.0 L215.1,551.5 L220.0,545.3 L233.1,536.5 L227.1,551.5 L221.5,557.0 L207.5,575.2 L187.7,596.5 L185.0,598.1Z" fill="#86d549" stroke="#000" stroke-width="1.3"/>
<path d="M185.0,596.1 L183.0,596.4 L181.0,595.1 L180.4,593.0 L181.2,591.0 L186.9,586.5 L196.5,576.0 L201.5,568.2 L208.0,564.0 L218.0,554.1 L219.6,552.0 L222.0,546.7 L226.5,544.7 L226.7,547.5 L225.6,550.0 L219.0,554.6 L210.0,565.7 L206.3,573.0 L199.5,578.3 L190.0,589.1 L186.7,594.5 L185.0,596.1Z" fill="#c2df23" stroke="#000" stroke-width="1.3"/>
<path d="M202.0,573.0 L201.8,572.0 L202.7,570.0 L205.5,568.7 L204.8,571.5 L202.0,573.0Z" fill="#fde725" stroke="#000" stroke-width="1.3"/>
<path d="M184.0,594.7 L182.5,594.3 L182.3,592.5 L186.0,590.2 L185.5,593.0 L184.0,594.7Z" fill="#fde725" stroke="#000" stroke-width="1.3"/>
</g>
</g>
<rect x="75.5" y="175.5" width="643.8" height="532.8" fill="none" stroke="#222" stroke-width="1"/>
<line x1="117.9" y1="708.5" x2="117.9" y2="712" stroke="#222" stroke-width="0.9"/>
<text x="117.4" y="725.3" text-anchor="middle" font-size="12.2" fill="#222">−86</text>
<line x1="202.6" y1="708.5" x2="202.6" y2="712" stroke="#222" stroke-width="0.9"/>
<text x="202.1" y="725.3" text-anchor="middle" font-size="12.2" fill="#222">−84</text>
<line x1="287.4" y1="708.5" x2="287.4" y2="712" stroke="#222" stroke-width="0.9"/>
<text x="286.9" y="725.3" text-anchor="middle" font-size="12.2" fill="#222">−82</text>
<line x1="372.1" y1="708.5" x2="372.1" y2="712" stroke="#222" stroke-width="0.9"/>
<text x="371.6" y="725.3" text-anchor="middle" font-size="12.2" fill="#222">−80</text>
<line x1="456.8" y1="708.5" x2="456.8" y2="712" stroke="#222" stroke-width="0.9"/>
<text x="456.3" y="725.3" text-anchor="middle" font-size="12.2" fill="#222">−78</text>
<line x1="541.6" y1="708.5" x2="541.6" y2="712" stroke="#222" stroke-width="0.9"/>
<text x="541.1" y="725.3" text-anchor="middle" font-size="12.2" fill="#222">−76</text>
<line x1="626.3" y1="708.5" x2="626.3" y2="712" stroke="#222" stroke-width="0.9"/>
<text x="625.8" y="725.3" text-anchor="middle" font-size="12.2" fill="#222">−74</text>
<line x1="711.0" y1="708.5" x2="711.0" y2="712" stroke="#222" stroke-width="0.9"/>
<text x="710.5" y="725.3" text-anchor="middle" font-size="12.2" fill="#222">−72</text>
<line x1="71.5" y1="191.4" x2="75.5" y2="191.4" stroke="#222" stroke-width="0.9"/>
<text x="67.2" y="196.0" text-anchor="end" font-size="12.2" fill="#222">38</text>
<line x1="71.5" y1="276.2" x2="75.5" y2="276.2" stroke="#222" stroke-width="0.9"/>
<text x="67.2" y="280.8" text-anchor="end" font-size="12.2" fill="#222">36</text>
<line x1="71.5" y1="360.9" x2="75.5" y2="360.9" stroke="#222" stroke-width="0.9"/>
<text x="67.2" y="365.5" text-anchor="end" font-size="12.2" fill="#222">34</text>
<line x1="71.5" y1="445.6" x2="75.5" y2="445.6" stroke="#222" stroke-width="0.9"/>
<text x="67.2" y="450.2" text-anchor="end" font-size="12.2" fill="#222">32</text>
<line x1="71.5" y1="530.4" x2="75.5" y2="530.4" stroke="#222" stroke-width="0.9"/>
<text x="67.2" y="535.0" text-anchor="end" font-size="12.2" fill="#222">30</text>
<line x1="71.5" y1="615.1" x2="75.5" y2="615.1" stroke="#222" stroke-width="0.9"/>
<text x="67.2" y="619.7" text-anchor="end" font-size="12.2" fill="#222">28</text>
<line x1="71.5" y1="699.9" x2="75.5" y2="699.9" stroke="#222" stroke-width="0.9"/>
<text x="67.2" y="704.5" text-anchor="end" font-size="12.2" fill="#222">26</text>
</svg>
</body></html>
